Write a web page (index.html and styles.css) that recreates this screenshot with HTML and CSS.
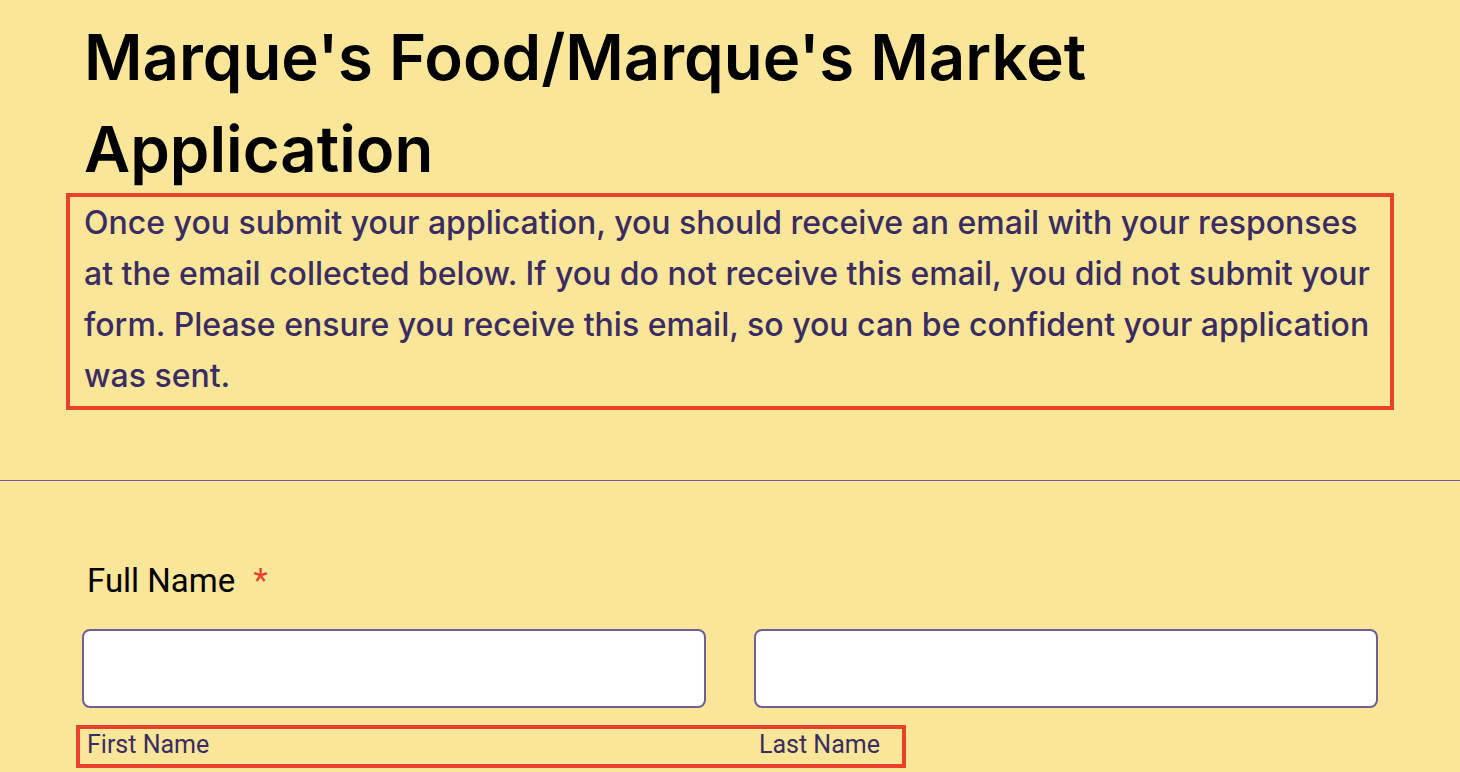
FILE: index.html
```html
<!DOCTYPE html>
<html>
<head>
<meta charset="utf-8">
<link rel="stylesheet" href="styles.css">
</head>
<body>
<div class="page">
  <header class="form-header">
    <h1 class="title">Marque's Food/Marque's Market Application</h1>
    <div class="description">Once you submit your application, you should receive an email with your responses at the email collected below. If you do not receive this email, you did not submit your form. Please ensure you receive this email, so you can be confident your application was sent.</div>
  </header>
  <section class="field">
    <label class="field-label">Full Name <span class="req">*</span></label>
    <div class="inputs">
      <div class="col">
        <input class="text-input" type="text">
        <span class="sublabel">First Name</span>
      </div>
      <div class="col">
        <input class="text-input" type="text">
        <span class="sublabel">Last Name</span>
      </div>
      <div class="highlight"></div>
    </div>
  </section>
</div>
</body>
</html>
```

FILE: styles.css
```css
html, body {
  margin: 0;
  padding: 0;
  background: #fae699;
  overflow: hidden;
}
.page {
  width: 1460px;
  height: 772px;
}
.form-header {
  padding: 11px 0 70px 0;
  border-bottom: 1px solid #7458a8;
}
.title {
  margin: 0 0 0 84px;
  font-family: Inter, "Noto Sans", sans-serif;
  font-weight: 600;
  font-size: 63.5px;
  line-height: 92px;
  color: #000;
  width: 1200px;
}
.description {
  box-sizing: border-box;
  margin: -2px 0 0 66px;
  width: 1328px;
  border: 4px solid #e8432a;
  padding: 0 10px 5px 14px;
  font-family: Inter, "Noto Sans", sans-serif;
  font-weight: 500;
  font-size: 32px;
  line-height: 51px;
  color: #3a2c63;
}
.field {
  padding: 82px 0 0 82px;
}
.field-label {
  display: block;
  margin-left: 5px;
  font-family: Roboto, sans-serif;
  font-size: 33px;
  line-height: 36px;
  color: #000;
}
.req {
  color: #e8432a;
  margin-left: 10px;
}
.inputs {
  position: relative;
  display: flex;
  gap: 48px;
  margin-top: 30px;
  width: 1296px;
}
.col {
  flex: 1;
  display: flex;
  flex-direction: column;
}
.text-input {
  box-sizing: border-box;
  height: 79px;
  width: 100%;
  border: 2px solid #6f5f95;
  border-radius: 8px;
  background: #fff;
  margin: 0;
}
.sublabel {
  margin-top: 24px;
  margin-left: 5px;
  font-family: Roboto, sans-serif;
  font-size: 25px;
  line-height: 26px;
  color: #3a2c63;
}
.highlight {
  position: absolute;
  box-sizing: border-box;
  left: -6px;
  top: 96px;
  width: 830px;
  height: 43px;
  border: 4px solid #e8432a;
}
```
